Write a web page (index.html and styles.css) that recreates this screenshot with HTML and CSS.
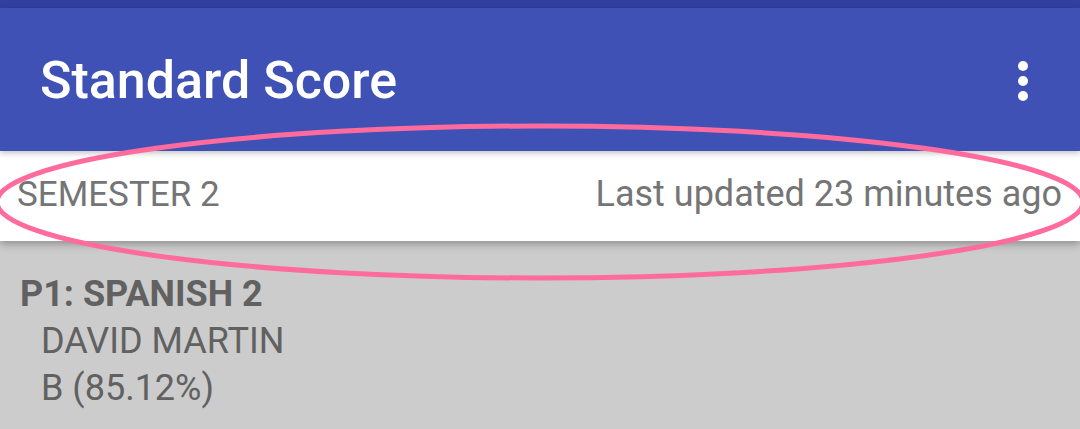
FILE: index.html
```html
<!DOCTYPE html>
<html>
<head>
<meta charset="utf-8">
<link rel="stylesheet" href="styles.css">
</head>
<body>
<div class="screen">
  <div class="statusbar"></div>
  <header class="appbar">
    <h1 class="title">Standard Score</h1>
    <svg class="menu" width="14" height="44" viewBox="0 0 14 44">
      <circle cx="7" cy="7" r="5" fill="#fff"/>
      <circle cx="7" cy="22" r="5" fill="#fff"/>
      <circle cx="7" cy="37" r="5" fill="#fff"/>
    </svg>
  </header>
  <div class="subbar">
    <span class="semester">SEMESTER 2</span>
    <span class="updated">Last updated 23 minutes ago</span>
  </div>
  <main class="content">
    <div class="course">P1: SPANISH 2</div>
    <div class="detail">DAVID MARTIN</div>
    <div class="detail">B (85.12%)</div>
  </main>
  <svg class="annotation" width="1080" height="429" viewBox="0 0 1080 429">
    <ellipse cx="540" cy="202" rx="543" ry="76" fill="none" stroke="#ff6b9d" stroke-width="5"/>
  </svg>
</div>
</body>
</html>
```

FILE: styles.css
```css
* { box-sizing: border-box; margin: 0; padding: 0; }
html, body { width: 1080px; height: 429px; overflow: hidden; }
body { background: #cccccc; font-family: Roboto, "Liberation Sans", sans-serif; }
.screen { position: relative; width: 1080px; height: 429px; display: flex; flex-direction: column; background: #cccccc; }
.statusbar { height: 8px; background: #3140a0; }
.appbar {
  height: 143px; background: #3f51b5;
  display: flex; align-items: center; justify-content: space-between;
  padding: 0 50px 0 40px;
  position: relative; z-index: 2;
  box-shadow: 0 2px 6px rgba(0,0,0,0.25);
}
.title { color: #fff; font-weight: 500; font-size: 52px; letter-spacing: 0; line-height: 1; margin-top: 2px; }
.menu { display: block; margin-top: 2px; }
.subbar {
  height: 90px; background: #fff;
  display: flex; align-items: center; justify-content: space-between;
  padding: 0 18px 0 17px;
  color: #757575;
  position: relative; z-index: 1;
  box-shadow: 0 3px 8px rgba(0,0,0,0.3);
}
.semester { font-size: 35px; margin-top: -4px; }
.updated { font-size: 36px; margin-top: -4px; }
.content { padding: 29px 20px 0 20px; color: #616161; }
.course { font-weight: 700; font-size: 36px; line-height: 48px; }
.detail { font-size: 36px; line-height: 47px; padding-left: 21px; }
.annotation { position: absolute; left: 0; top: 0; z-index: 5; pointer-events: none; }
```
